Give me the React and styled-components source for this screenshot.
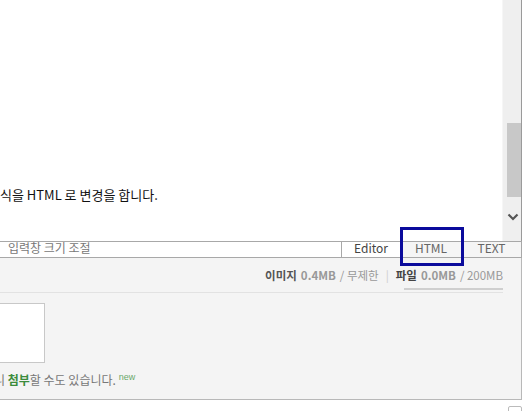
import React from "react";
import styled, { createGlobalStyle } from "styled-components";

const Global = createGlobalStyle`
  html, body {
    margin: 0;
    padding: 0;
    background: #fff;
    overflow: hidden;
  }
  body {
    font-family: "Noto Sans CJK KR", "DejaVu Sans", sans-serif;
  }
`;

const Page = styled.div`
  position: relative;
  width: 526px;
  height: 411px;
  overflow: hidden;
`;

const Frame = styled.div`
  width: 522px;
  display: flex;
  flex-direction: column;
`;

const EditorArea = styled.div`
  height: 241px;
  display: flex;
  border-right: 1px solid #9a9a9a;
`;

const Content = styled.div`
  flex: 1;
  padding-top: 186px;
  font-size: 13px;
  color: #111;
  line-height: 18px;
  white-space: nowrap;
`;

const Scrollbar = styled.div`
  width: 18px;
  background: #efefef;
  border-left: 1px solid #f6f6f6;
  display: flex;
  flex-direction: column;
  align-items: flex-end;
`;

const Thumb = styled.div`
  margin-top: 123px;
  width: 14px;
  height: 74px;
  background: #c8c8c8;
`;

const Arrow = styled.div`
  margin-top: 16px;
  width: 17px;
  display: flex;
  justify-content: center;
`;

const TabRow = styled.div`
  height: 17px;
  display: flex;
  font-size: 12px;
  color: #666;
  line-height: 12px;
`;

const Resize = styled.div`
  flex: 1;
  border-top: 1px solid #a8a8a8;
  border-bottom: 1px solid #a8a8a8;
  padding-left: 8px;
  color: #777;
  background: #fff;
`;

const Tab = styled.div`
  width: ${(p) => p.$w}px;
  text-align: center;
  background: ${(p) => (p.$active ? "#fff" : "#f5f5f5")};
  border-top: 1px solid #a8a8a8;
  border-bottom: 1px solid #a8a8a8;
  border-left: ${(p) => (p.$active ? "1px solid #a8a8a8" : "none")};
  border-right: ${(p) => (p.$last ? "1px solid #a8a8a8" : "none")};
  color: ${(p) => (p.$active ? "#444" : "#666")};
`;

const Focus = styled.div`
  position: absolute;
  left: 400px;
  top: 227px;
  width: 58px;
  height: 33px;
  border: 3px solid #0b0b9c;
`;

const Panel = styled.div`
  height: 141px;
  background: #f4f4f4;
  border-right: 1px solid #b8b8b8;
  border-bottom: 1px solid #b8b8b8;
  display: flex;
  flex-direction: column;
  padding-right: 18px;
`;

const Info = styled.div`
  display: flex;
  justify-content: flex-end;
  align-items: center;
  gap: 4px;
  height: 20px;
  margin-top: 7px;
  font-size: 11.5px;
  color: #999;
  white-space: nowrap;
`;

const Label = styled.span`
  font-weight: bold;
  color: ${(p) => p.$c || "#555"};
`;

const Sep = styled.span`
  color: #ccc;
  margin: 0 3px;
`;

const Progress = styled.div`
  align-self: flex-end;
  width: 99px;
  height: 2px;
  background: #cfcfcf;
  margin-top: 3px;
`;

const Divider = styled.div`
  height: 1px;
  background: #e2e2e2;
  margin-top: 2px;
`;

const FileBox = styled.div`
  width: 44px;
  height: 58px;
  margin-top: 10px;
  background: #fff;
  border: 1px solid #c8c8c8;
  border-left: none;
`;

const Note = styled.div`
  margin-top: 7px;
  font-size: 12px;
  color: #777;
  white-space: nowrap;
  overflow: hidden;
  line-height: 14px;
`;

const Cut = styled.span`
  margin-left: -6px;
`;

const Green = styled.span`
  color: #3c8c3c;
  font-weight: bold;
`;

const New = styled.sup`
  color: #6aa86a;
  font-size: 9px;
  margin-left: 3px;
  font-family: "Liberation Sans", sans-serif;
`;

const Corner = styled.div`
  align-self: flex-end;
  margin-top: 6px;
  width: 12px;
  height: 8px;
  border: 1px solid #bbb;
  border-radius: 2px;
  background: #fff;
`;

export default function App() {
  return (
    <Page>
      <Global />
      <Frame>
        <EditorArea>
          <Content>식을 HTML 로 변경을 합니다.</Content>
          <Scrollbar>
            <Thumb />
            <Arrow>
              <svg width="12" height="8" viewBox="0 0 12 8">
                <path d="M1.5 1.5 L6 6 L10.5 1.5" fill="none" stroke="#555" strokeWidth="2.2" />
              </svg>
            </Arrow>
          </Scrollbar>
        </EditorArea>
        <TabRow>
          <Resize>입력창 크기 조절</Resize>
          <Tab $w={58} $active>Editor</Tab>
          <Tab $w={62}>HTML</Tab>
          <Tab $w={59} $last>TEXT</Tab>
        </TabRow>
        <Panel>
          <Info>
            <Label>이미지</Label>
            <Label $c="#999">0.4MB</Label>
            <span>/ 무제한</span>
            <Sep>|</Sep>
            <Label $c="#444">파일</Label>
            <Label $c="#999">0.0MB</Label>
            <span>/ 200MB</span>
          </Info>
          <Progress />
          <Divider />
          <FileBox />
          <Note>
            <Cut>니</Cut> <Green>첨부</Green>할 수도 있습니다.<New>new</New>
          </Note>
        </Panel>
        <Corner />
      </Frame>
      <Focus />
    </Page>
  );
}
